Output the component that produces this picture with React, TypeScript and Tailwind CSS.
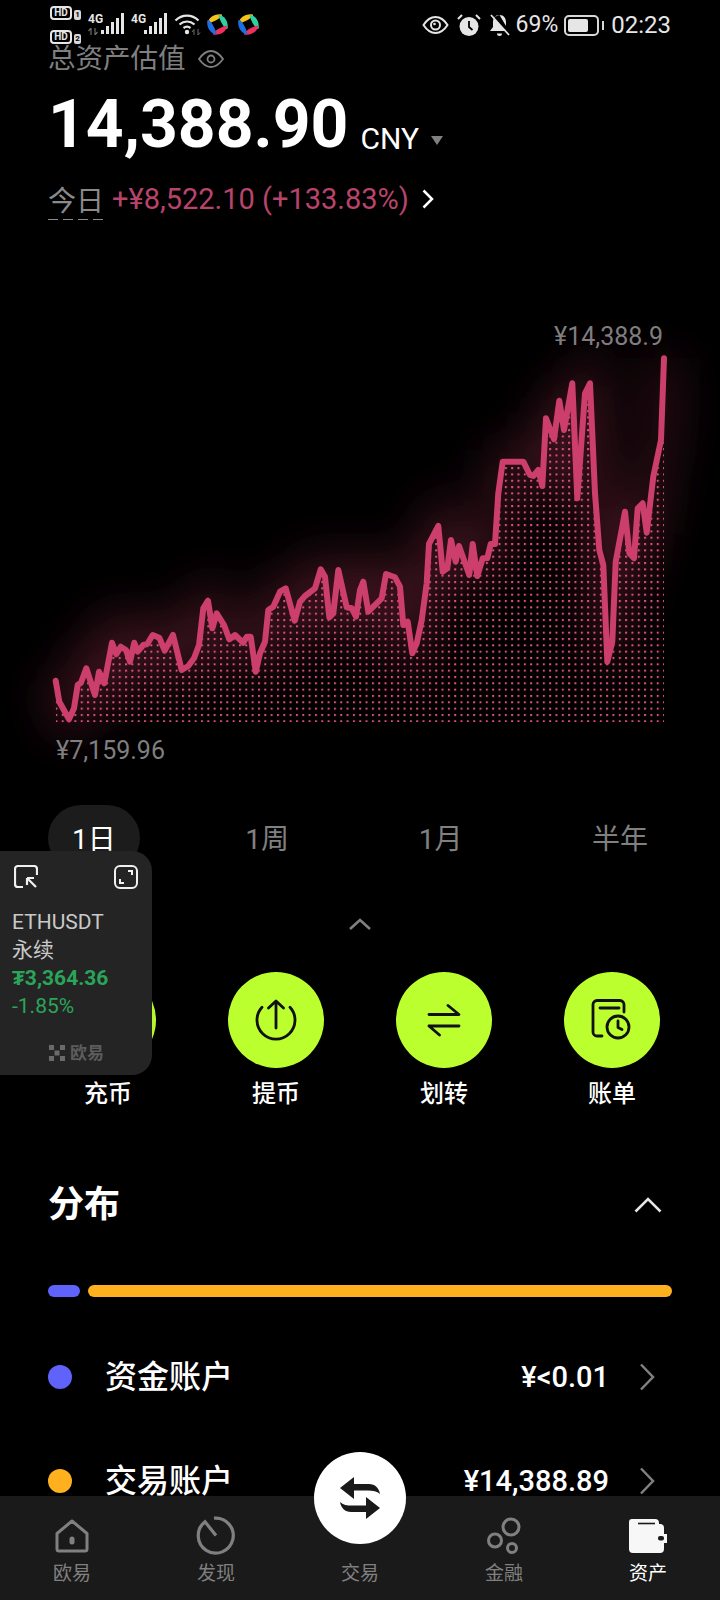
const LINE =
  '55.7,680.7 59.3,701.7 69,719.3 74,708.3 77.7,685 81,682.7 86.3,668.3 95,695 99,671.7 104.3,683.3 112,642.7 116.3,654.3 120.7,646.7 126,650 130,661.7 134.3,642.7 137.7,651.7 143.3,645 147.3,644 152.7,635 159.3,637.7 164.7,650.7 173,635 181.7,670 188.3,666 194,658.3 199,645 203.3,608.3 208,600.7 212.3,628.3 216.7,613.3 224,625 229.3,639.3 235,635 243.3,642.7 246.7,636.7 250.7,636.7 255.7,671.7 260,653.3 265,641.7 268.3,610 273.3,606.7 280,591.7 285.7,588.3 294.7,620.7 300,601.7 305,596 315,588.3 320.7,569.3 325,576.7 329.3,617.3 333.3,613.3 338.3,570 346.7,607.3 351.7,608.3 356,616.7 360,590 363.3,581.7 368.3,611.7 381.7,598.3 386,574 395,577.3 400,586.7 403.3,625 407.7,621.7 412.3,653.3 416.7,643.3 421.7,620 426.7,583.3 429,544 438.3,526 442.7,571.7 447.3,568.3 451,540 455.7,561.7 459,546 469.3,575 472.7,544 477.3,576 482.7,558.3 487.3,558.3 490.7,544 495,544 498.3,493.3 502.7,461.7 523.3,461.7 530,475 533.3,476 538.3,470 542.3,486 546,418.3 554,439.3 559.3,400.7 564,430 572.3,383.3 577.3,498.3 585,393.3 590,383.3 595,493.3 599.3,550 603.3,565 607.3,661.7 612.3,641.7 615.7,561.7 625,511.7 629.3,553.3 634,558.3 637.7,508.3 642.7,503.3 646.7,532.7 653.3,476.7 661,440 664,358.3'

const AREA = `${LINE} 664,722 56,722`

function AppBadge() {
  const petal = 'M1.800 9C2.600 4.600 7.400.6 14.400 1.200 15.400 1.400 15.600 2.400 15 3.200 12.400 6 7.600 8.400 3.200 9.800 2.200 10 1.800 9.800 1.800 9Z'
  return (
    <svg width="23" height="23" viewBox="0 0 22 22">
      <path d={petal} fill="#f6c21c" />
      <path d={petal} fill="#2fcf9f" transform="rotate(90 11 11)" />
      <path d={petal} fill="#ee2f5f" transform="rotate(180 11 11)" />
      <path d={petal} fill="#1f6fe0" transform="rotate(270 11 11)" />
    </svg>
  )
}

function Signal() {
  return (
    <svg width="23" height="22" viewBox="0 0 23 22" fill="#e6e6e6">
      <rect x="0" y="17" width="3" height="4" />
      <rect x="5" y="13" width="3" height="8" />
      <rect x="10" y="9" width="3" height="12" />
      <rect x="15" y="5" width="3" height="16" />
      <rect x="20" y="0" width="3" height="21" />
    </svg>
  )
}

function DataArrows() {
  return (
    <svg width="10" height="7" viewBox="0 0 10 7" stroke="#6f6f6f" strokeWidth="1.2" fill="none">
      <path d="M3 7V0L0.5 3M7 0v7l2.5-3" />
    </svg>
  )
}

function HdBadge({ n }: { n: string }) {
  return (
    <div className="flex items-end gap-[2px]">
      <span className="flex h-[14px] w-[22px] items-center justify-center rounded-[4px] border-2 border-[#e6e6e6] text-[10px] leading-none font-bold text-[#e6e6e6]">
        HD
      </span>
      <span className="flex h-[10px] w-[7px] items-center justify-center rounded-[2px] bg-[#d8d8d8] text-[8px] leading-none font-bold text-black">
        {n}
      </span>
    </div>
  )
}

function StatusBar() {
  return (
    <div className="flex h-[45px] items-start pr-[49px] pl-[50px]">
      <div className="flex h-[44px] w-[31px] flex-col justify-between pt-[6px]">
        <HdBadge n="1" />
        <HdBadge n="2" />
      </div>
      <div className="relative mt-[13px] ml-[7px] h-[22px] w-[36px]">
        <span className="absolute top-0 left-0 text-[12px] leading-[12px] font-bold text-[#e6e6e6]">4G</span>
        <span className="absolute bottom-0 left-0">
          <DataArrows />
        </span>
        <span className="absolute right-0 bottom-0">
          <Signal />
        </span>
      </div>
      <div className="relative mt-[13px] ml-[7px] h-[22px] w-[36px]">
        <span className="absolute top-0 left-0 text-[12px] leading-[12px] font-bold text-[#e6e6e6]">4G</span>
        <span className="absolute right-0 bottom-0">
          <Signal />
        </span>
      </div>
      <svg className="mt-[13px] ml-[7px]" width="27" height="22" viewBox="0 0 27 22" fill="none">
        <path d="M1.500 7.500C8 1 18 1 24.500 7.500M5.500 11.500C10 7.500 16 7.500 20.500 11.500M9.500 15C11.500 13.500 14.500 13.500 16.500 15" stroke="#e6e6e6" strokeWidth="2.2" />
        <circle cx="13" cy="19" r="2.2" fill="#e6e6e6" />
        <path d="M20 22v-5.500l-2 2.500M24 16v6l2-2.500" stroke="#6f6f6f" strokeWidth="1" />
      </svg>
      <div className="mt-[13px] ml-[5px] flex gap-[8px]">
        <AppBadge />
        <AppBadge />
      </div>
      <div className="ml-auto flex h-[50px] items-center text-[#e6e6e6]">
        <svg width="27" height="20" viewBox="0 0 27 20" fill="none" stroke="#e6e6e6" strokeWidth="2">
          <path d="M1.500 10C5 4.500 9 2 13.500 2s8.500 2.500 12 8c-3.500 5.500-7.500 8-12 8S5 15.500 1.500 10Z" />
          <circle cx="13.500" cy="10" r="4.500" />
          <circle cx="12.500" cy="9" r="1.300" fill="#e6e6e6" stroke="none" />
        </svg>
        <svg className="ml-[8px]" width="24" height="22" viewBox="0 0 24 22">
          <circle cx="12" cy="12.500" r="9.500" fill="#e6e6e6" />
          <path d="M12 7v6l3.500 3" stroke="#000" strokeWidth="1.800" fill="none" />
          <path d="M1 5l4-4M23 5l-4-4" stroke="#e6e6e6" strokeWidth="2" />
        </svg>
        <svg className="ml-[8px]" width="21" height="22" viewBox="0 0 21 22">
          <path d="M10.500 1C6 1 4 4.500 4 8v5l-3 4h16L4 3.500M10.500 1c4.500 0 6.500 3.500 6.500 7v4" fill="#e6e6e6" />
          <path d="M8 19.500h5v.5a2.500 2 0 0 1-5 0Z" fill="#e6e6e6" />
          <path d="M2 1l18 20" stroke="#e6e6e6" strokeWidth="1.800" />
        </svg>
        <span className="ml-[6px] text-[23px]">69%</span>
        <div className="ml-[6px] flex h-[21px] w-[35px] items-center rounded-[5px] border-2 border-[#d8d8d8] p-[2px]">
          <div className="h-full w-[20px] rounded-[2px] bg-[#e6e6e6]" />
        </div>
        <div className="ml-[3px] h-[9px] w-[2px] bg-[#d8d8d8]" />
        <span className="ml-[7px] text-[24px]">02:23</span>
      </div>
    </div>
  )
}

function Chart() {
  return (
    <svg className="block overflow-visible" width="720" height="380" viewBox="0 350 720 380">
      <defs>
        <filter id="glow" x="-10%" y="-30%" width="120%" height="160%">
          <feGaussianBlur stdDeviation="24" />
        </filter>
        <pattern id="dots" x="55.400" y="720.300" width="6.330" height="6.330" patternUnits="userSpaceOnUse">
          <rect width="2" height="2" fill="#e0507a" />
        </pattern>
        <clipPath id="area">
          <polygon points={AREA} />
        </clipPath>
      </defs>
      <polyline points={LINE} fill="none" stroke="#c93a68" strokeOpacity="0.32" strokeWidth="24" filter="url(#glow)" />
      <rect x="55" y="350" width="610" height="373" fill="url(#dots)" clipPath="url(#area)" />
      <polyline points={LINE} fill="none" stroke="#cc3e6c" strokeWidth="6" strokeLinecap="round" strokeLinejoin="round" />
    </svg>
  )
}

function UploadIcon() {
  return (
    <svg width="44" height="44" viewBox="0 0 44 44" fill="none" stroke="#111" strokeWidth="2.800">
      <path d="M8 9.200a19 19 0 1 0 28 0" strokeLinecap="round" />
      <path d="M22 30V3.500M14.500 10L22 3l7.500 7" strokeLinecap="round" strokeLinejoin="round" />
    </svg>
  )
}

function TransferIcon() {
  return (
    <svg width="44" height="44" viewBox="0 0 44 44" fill="none" stroke="#111" strokeWidth="2.800" strokeLinecap="round" strokeLinejoin="round">
      <path d="M7 16.500h30L26 7.500M7 28h30M7 28l10.500 9" />
    </svg>
  )
}

function BillIcon() {
  return (
    <svg width="44" height="44" viewBox="0 0 44 44" fill="none" stroke="#111" strokeWidth="2.800" strokeLinecap="round" strokeLinejoin="round">
      <path d="M34 14V6.500a4 4 0 0 0-4-4H7a4 4 0 0 0-4 4V34a4 4 0 0 0 4 4h5" />
      <path d="M10 10h19" />
      <circle cx="28" cy="29" r="11" />
      <path d="M28 23v6.500l4 2" />
    </svg>
  )
}

function ActionButton({ label, children }: { label: string; children?: React.ReactNode }) {
  return (
    <div className="flex flex-col items-center">
      <div className="flex h-[96px] w-[96px] items-center justify-center rounded-full bg-[#bcff2f]">{children}</div>
      <span className="mt-[12px] text-[24px] leading-[28px] font-medium text-white">{label}</span>
    </div>
  )
}

function Chevron({ className }: { className: string }) {
  return (
    <svg className={className} width="16" height="28" viewBox="0 0 16 28" fill="none" stroke="currentColor" strokeWidth="2.500">
      <path d="M2 1.500l12 12.500L2 26.500" />
    </svg>
  )
}

function AccountRow({ color, name, amount }: { color: string; name: string; amount: string }) {
  return (
    <div className="flex h-[104px] items-center px-[48px]">
      <div className={`h-[24px] w-[24px] rounded-full ${color}`} />
      <span className="ml-[33px] text-[32px] leading-[40px] font-medium text-white">{name}</span>
      <span className="ml-auto text-[29px] leading-[40px] font-medium text-white">{amount}</span>
      <Chevron className="mr-[17px] ml-[30px] text-[#808080]" />
    </div>
  )
}

function FloatingCard() {
  return (
    <div className="absolute top-[851px] left-0 h-[224px] w-[152px] rounded-r-[20px] bg-[#242424] pt-[14px] pr-[14px] pl-[12px] shadow-lg">
      <div className="flex items-start justify-between">
        <svg className="ml-[2px]" width="24" height="24" viewBox="0 0 24 24" fill="none" stroke="#f0f0f0" strokeWidth="2.200">
          <path d="M9 22H4a3 3 0 0 1-3-3V4a3 3 0 0 1 3-3h16a3 3 0 0 1 3 3v6" />
          <path d="M13 13v7M13 13h7M13 13l9 9" />
        </svg>
        <svg width="24" height="24" viewBox="0 0 24 24" fill="none" stroke="#f0f0f0" strokeWidth="2">
          <rect x="1" y="1" width="22" height="22" rx="5" />
          <path d="M14 6h4v4M10 18H6v-4" />
        </svg>
      </div>
      <div className="mt-[19px] text-[21px] leading-[28px] text-[#c9c9c9]">
        <div>ETHUSDT</div>
        <div>永续</div>
        <div className="font-bold text-[#2aa55a]">₮3,364.36</div>
        <div className="text-[#2aa55a]">-1.85%</div>
      </div>
      <div className="mt-[23px] ml-[37px] flex items-center gap-[5px] text-[17px] leading-[20px] font-bold text-[#5c5c5c]">
        <svg width="16" height="16" viewBox="0 0 16 16" fill="#6a6a6a">
          <rect width="5" height="5" />
          <rect x="11" width="5" height="5" />
          <rect x="5.500" y="5.500" width="5" height="5" />
          <rect y="11" width="5" height="5" />
          <rect x="11" y="11" width="5" height="5" />
        </svg>
        <span>欧易</span>
      </div>
    </div>
  )
}

function NavItem({ label, active, children }: { label: string; active?: boolean; children?: React.ReactNode }) {
  return (
    <div className="flex flex-col items-center">
      <div className="flex h-[40px] items-center justify-center">{children}</div>
      <span className={`mt-[7px] text-[19px] leading-[22px] ${active ? 'text-white' : 'text-[#808080]'}`}>{label}</span>
    </div>
  )
}

function BottomNav() {
  return (
    <div className="absolute right-0 bottom-0 left-0 grid h-[104px] grid-cols-5 bg-[#1a1a1a] pt-[20px]">
      <NavItem label="欧易">
        <svg width="34" height="34" viewBox="0 0 34 34" fill="none" stroke="#808080" strokeWidth="3" strokeLinejoin="round">
          <path d="M2 14.500L17 2l15 12.500V30a2 2 0 0 1-2 2H4a2 2 0 0 1-2-2Z" />
          <rect x="16" y="19" width="2" height="5" rx="1" fill="#808080" />
        </svg>
      </NavItem>
      <NavItem label="发现">
        <svg width="40" height="40" viewBox="0 0 40 40" fill="none" stroke="#808080" strokeWidth="3.200">
          <path d="M18 2.200A17.500 17.500 0 1 1 9 5.800L20 19.500" />
        </svg>
      </NavItem>
      <NavItem label="交易" />
      <NavItem label="金融">
        <svg width="34" height="38" viewBox="0 0 34 38" fill="none" stroke="#808080" strokeWidth="3">
          <circle cx="24" cy="10" r="8" />
          <circle cx="8" cy="23.500" r="6.500" />
          <circle cx="25" cy="31" r="4.500" />
        </svg>
      </NavItem>
      <NavItem label="资产" active>
        <svg width="38" height="34" viewBox="0 0 38 34">
          <path d="M3 0h23a4 4 0 0 1 4 4v1h2a4 4 0 0 1 3 4v6h3v9h-3v6a4 4 0 0 1-4 4H4a4 4 0 0 1-4-4V3a3 3 0 0 1 3-3Z" fill="#f7f7f7" />
          <path d="M9 4.500h17" stroke="#1a1a1a" strokeWidth="1.600" />
          <rect x="29" y="17" width="6" height="4.500" rx="2" fill="#1a1a1a" />
        </svg>
      </NavItem>
      <div className="absolute top-[-44px] left-1/2 flex h-[92px] w-[92px] -translate-x-1/2 items-center justify-center rounded-full bg-white">
        <svg width="46" height="46" viewBox="0 0 46 46" fill="#1a1a1a">
          <path d="M3 13L17 2v7h15c6 0 10 4 11 10-3-3-7-3.500-12-3.500H17V24Z" />
          <path d="M3 13L17 2v7h15c6 0 10 4 11 10-3-3-7-3.500-12-3.500H17V24Z" transform="rotate(180 23 23)" />
        </svg>
      </div>
    </div>
  )
}

export default function App() {
  return (
    <div className="relative h-[1600px] w-[720px] overflow-hidden bg-black font-[Roboto,'Noto_Sans_CJK_SC',sans-serif]">
      <StatusBar />

      <div className="flex h-[28px] items-center px-[48px]">
        <span className="text-[27.500px] leading-[28px] text-[#7f7f7f]">总资产估值</span>
        <svg className="ml-[12px]" width="26" height="18" viewBox="0 0 26 18" fill="none" stroke="#7f7f7f" strokeWidth="1.800">
          <path d="M1 9c3.500-5 7.500-8 12-8s8.500 3 12 8c-3.500 5-7.500 8-12 8S4.500 14 1 9Z" />
          <circle cx="13" cy="9" r="3.500" />
        </svg>
      </div>

      <div className="mt-[15px] flex items-end px-[48px]">
        <span className="text-[66px] leading-[74px] font-bold text-white">14,388.90</span>
        <span className="mb-[6px] ml-[12px] text-[30px] leading-[34px] text-white">CNY</span>
        <span className="mb-[17px] ml-[12px] h-0 w-0 border-x-[6px] border-t-[9px] border-x-transparent border-t-[#808080]" />
      </div>

      <div className="mt-[22px] flex items-center px-[48px]">
        <div className="flex flex-col">
          <span className="text-[28px] leading-[34px] text-[#8a8a8a]">今日</span>
          <div className="h-px w-[55px] bg-[repeating-linear-gradient(90deg,#8a8a8a_0,#8a8a8a_10px,transparent_10px,transparent_15px)]" />
        </div>
        <span className="ml-[8px] -translate-y-[3px] text-[29px] leading-[36px] text-[#b8446a]">+¥8,522.10 (+133.83%)</span>
        <svg className="ml-[13px] -translate-y-[3px]" width="12" height="20" viewBox="0 0 12 20" fill="none" stroke="#fff" strokeWidth="2.500">
          <path d="M1.500 1.500L10 10l-8.500 8.500" />
        </svg>
      </div>

      <div className="mt-[102px] h-[28px] pr-[57px] text-right text-[25px] leading-[30px] text-[#7f7f7f]">¥14,388.9</div>

      <Chart />

      <div className="mt-[6px] pl-[56px] text-[25px] leading-[30px] text-[#7f7f7f]">¥7,159.96</div>

      <div className="mt-[39px] flex justify-between px-[48px] text-[28px] text-[#808080]">
        <span className="rounded-full bg-[#1c1c1c] px-[24px] pt-[17px] pb-[13px] leading-[36px] text-white">1日</span>
        <span className="px-[24px] pt-[17px] pb-[13px] leading-[36px]">1周</span>
        <span className="px-[24px] pt-[17px] pb-[13px] leading-[36px]">1月</span>
        <span className="px-[24px] pt-[17px] pb-[13px] leading-[36px]">半年</span>
      </div>

      <div className="mt-[47px] flex justify-center">
        <svg width="24" height="12" viewBox="0 0 24 12" fill="none" stroke="#808080" strokeWidth="2.500">
          <path d="M2 11l10-9 10 9" />
        </svg>
      </div>

      <div className="mx-[24px] mt-[42px] grid grid-cols-4">
        <ActionButton label="充币" />
        <ActionButton label="提币">
          <UploadIcon />
        </ActionButton>
        <ActionButton label="划转">
          <TransferIcon />
        </ActionButton>
        <ActionButton label="账单">
          <BillIcon />
        </ActionButton>
      </div>

      <div className="mt-[75px] flex items-center justify-between pr-[58px] pl-[48px]">
        <span className="text-[36px] leading-[44px] font-bold text-white">分布</span>
        <svg width="28" height="16" viewBox="0 0 28 16" fill="none" stroke="#e6e6e6" strokeWidth="2.500">
          <path d="M1.500 14.500L14 2l12.500 12.500" />
        </svg>
      </div>

      <div className="mt-[58px] flex gap-[8px] px-[48px]">
        <div className="h-[12px] w-[32px] rounded-full bg-[#5f63f9]" />
        <div className="h-[12px] flex-1 rounded-full bg-[#ffb01f]" />
      </div>

      <div className="mt-[28px]">
        <AccountRow color="bg-[#5f63f9]" name="资金账户" amount="¥<0.01" />
        <AccountRow color="bg-[#ffb01f]" name="交易账户" amount="¥14,388.89" />
      </div>

      <FloatingCard />
      <BottomNav />
    </div>
  )
}
